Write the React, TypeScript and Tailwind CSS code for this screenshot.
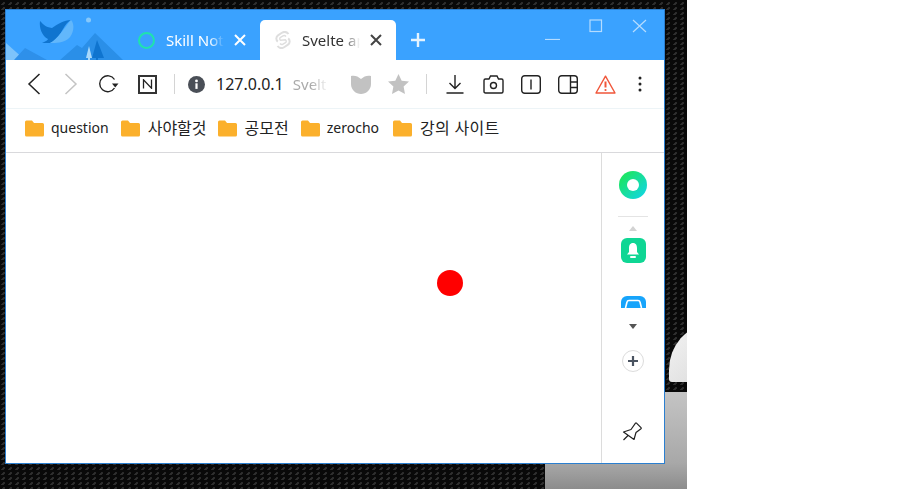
import React from "react";

const sans = "font-['Noto_Sans','Noto_Sans_CJK_KR',sans-serif]";

function Slot({ w, children, className = "" }: { w: string; children?: React.ReactNode; className?: string }) {
  return <div className={`flex items-center justify-center shrink-0 ${w} ${className}`}>{children}</div>;
}

function Folder() {
  return (
    <svg width="19" height="17" viewBox="0 0 19 17" className="shrink-0">
      <path d="M0 2Q0 .5 1.5 .5H7L9 3H17.5Q19 3 19 4.5V15Q19 16.5 17.5 16.5H1.5Q0 16.5 0 15Z" fill="#fbb02c" />
    </svg>
  );
}

function Bookmark({ label, gap, size, className = "" }: { label: string; gap: string; size: string; className?: string }) {
  return (
    <div className={`flex items-center ${gap} ${className}`}>
      <Folder />
      <span className={`${size} leading-none text-[#222] whitespace-nowrap`}>{label}</span>
    </div>
  );
}

function X({ c, w = 2 }: { c: string; w?: number }) {
  return (
    <svg width="12" height="12" viewBox="0 0 12 12">
      <path d="M1 1L11 11M11 1L1 11" stroke={c} strokeWidth={w} fill="none" />
    </svg>
  );
}

function Header() {
  return (
    <div className="relative h-[50px] bg-[#3aa2ff] overflow-hidden shrink-0">
      <svg className="absolute left-0 top-0" width="140" height="50" viewBox="0 0 140 50">
        <path d="M0 33L19 50H0Z" fill="#7cc3fb" />
        <path d="M8 50L19 38L41 50Z" fill="#2e90ea" />
        <path d="M54 50L71 35L76 38L89 23L117 50Z" fill="#2a8fe8" />
        <path d="M91 30L86 48H90V50H92V48H98Z" fill="#0f74cf" />
        <path d="M83 36L80 48H82V50H84V48H86Z" fill="#a9d8fb" />
        <path d="M34 11C37 14 39 17 46 18C52 14 58 10 65 10C56 15 56 28 44 33L36 33C40 31 42 30 42 29C36 26 33 18 34 11Z" fill="#0f74cf" />
        <path d="M65 10C69 14 68 24 62 29C57 33 50 33 44 33C52 29 58 18 65 10Z" fill="#62b7fb" />
        <circle cx="82.5" cy="10" r="2.5" fill="#86c8fb" />
      </svg>
      <div className="relative flex h-full pl-[130px] pt-[10px]">
        <div className="flex items-center w-[124px] h-[40px]">
          <Slot w="w-[20px]">
            <div className="w-[17px] h-[17px] rounded-full border-2 border-[#1fe3ad]" />
          </Slot>
          <span className={`ml-[10px] w-[58px] whitespace-nowrap text-[15px] leading-none text-white ${sans} [mask-image:linear-gradient(90deg,#000_75%,transparent)]`}>
            Skill Not
          </span>
          <Slot w="w-[12px]" className="ml-[10px]">
            <X c="#ffffff" />
          </Slot>
        </div>
        <div className="flex items-center w-[136px] h-[40px] bg-white rounded-t-[5px]">
          <Slot w="w-[18px]" className="ml-[14px]">
            <svg width="16" height="18" viewBox="0 0 16 18" fill="none" stroke="#dedede" strokeWidth="2">
              <path d="M13.5 3C11.5 .5 8.5 .7 6.5 2L3 4.3C.8 5.8 .8 9 2.8 10.6" />
              <path d="M2.5 15C4.5 17.5 7.5 17.3 9.5 16L13 13.7C15.2 12.2 15.2 9 13.2 7.4" />
              <path d="M11 5.5C10 4.3 8.8 4.3 8 4.8L5.5 6.4C4.5 7 4.5 8.5 5.5 9.3L10.5 8.7C11.5 9.5 11.5 11 10.5 11.6L8 13.2C7.2 13.7 6 13.7 5 12.5" strokeWidth="1.4" />
            </svg>
          </Slot>
          <span className={`ml-[10px] w-[58px] whitespace-nowrap text-[15px] leading-none text-[#333] ${sans} [mask-image:linear-gradient(90deg,#000_70%,transparent)]`}>
            Svelte ap
          </span>
          <Slot w="w-[12px]" className="ml-[10px]">
            <X c="#444444" />
          </Slot>
        </div>
        <Slot w="w-[16px]" className="ml-[14px] h-[40px]">
          <svg width="16" height="16" viewBox="0 0 16 16">
            <path d="M8 1V15M1 8H15" stroke="#e4f3ff" strokeWidth="2.4" />
          </svg>
        </Slot>
      </div>
      <div className="absolute right-0 top-0 flex items-start pt-[9px] pr-[17px] gap-[29px]">
        <svg width="15" height="13" viewBox="0 0 15 13" className="mt-[8px]">
          <path d="M0 12.5H15" stroke="#b5dcff" strokeWidth="1.2" />
        </svg>
        <svg width="14" height="14" viewBox="0 0 14 14">
          <rect x="1" y="1" width="11.5" height="11.5" fill="none" stroke="#b5dcff" strokeWidth="1.2" />
        </svg>
        <svg width="15" height="15" viewBox="0 0 15 15">
          <path d="M1 1L14 13M14 1L1 13" stroke="#b5dcff" strokeWidth="1.2" fill="none" />
        </svg>
      </div>
    </div>
  );
}

function Toolbar() {
  return (
    <div className="flex items-center h-[49px] pl-[9px] bg-white border-b border-[#edf4f7] shrink-0">
      <Slot w="w-[38px]">
        <svg width="14" height="22" viewBox="0 0 14 22"><path d="M12.5 1L2 11L12.5 21" fill="none" stroke="#222" strokeWidth="1.5" /></svg>
      </Slot>
      <Slot w="w-[36px]">
        <svg width="14" height="22" viewBox="0 0 14 22"><path d="M1.5 1L12 11L1.5 21" fill="none" stroke="#c4c4c4" strokeWidth="1.5" /></svg>
      </Slot>
      <Slot w="w-[38px]">
        <svg width="22" height="20" viewBox="0 0 22 20" fill="none">
          <path d="M17.5 5.5A8 8 0 1 0 17.5 14" stroke="#222" strokeWidth="1.4" />
          <path d="M15 9.5H21.5L18.2 13.5Z" fill="#222" />
        </svg>
      </Slot>
      <Slot w="w-[40px]">
        <div className="w-[19px] h-[19px] border-2 border-[#333] flex items-center justify-center">
          <svg width="11" height="10" viewBox="0 0 11 10"><path d="M1.5 9.5V.8L9.5 9.2V.5" fill="none" stroke="#222" strokeWidth="1.3" /></svg>
        </div>
      </Slot>
      <div className="w-px h-[20px] bg-[#d4d4d4] ml-[7px]" />
      <Slot w="w-[18px]" className="ml-[12px]">
        <svg width="17" height="17" viewBox="0 0 17 17">
          <circle cx="8.5" cy="8.5" r="8.5" fill="#4a4f57" />
          <rect x="7.4" y="7.3" width="2.2" height="5.6" fill="#fff" />
          <circle cx="8.5" cy="4.9" r="1.4" fill="#fff" />
        </svg>
      </Slot>
      <span className={`ml-[11px] text-[16px] leading-none text-[#222] whitespace-nowrap ${sans}`}>127.0.0.1</span>
      <span className={`ml-[9px] w-[36px] text-[15px] leading-none text-[#aaa] whitespace-nowrap ${sans} [mask-image:linear-gradient(90deg,#000_50%,transparent)]`}>Svelt</span>
      <Slot w="w-[24px]" className="ml-[20px]">
        <svg width="22" height="20" viewBox="0 0 22 20"><path d="M1 2C4 1 8 2 11 5C14 2 18 1 21 2V10C21 16 16 20 11 20C6 20 1 16 1 10Z" fill="#c2c2c2" /></svg>
      </Slot>
      <Slot w="w-[22px]" className="ml-[15px]">
        <svg width="21" height="20" viewBox="0 0 21 20"><path d="M10.5 0L13.7 6.7L21 7.6L15.6 12.6L17 20L10.5 16.4L4 20L5.4 12.6L0 7.6L7.3 6.7Z" fill="#c2c2c2" /></svg>
      </Slot>
      <div className="w-px h-[20px] bg-[#d4d4d4] ml-[16px]" />
      <Slot w="w-[18px]" className="ml-[19px]">
        <svg width="18" height="19" viewBox="0 0 18 19" fill="none" stroke="#222" strokeWidth="1.4">
          <path d="M9 0V13M3.5 8L9 13.5L14.5 8M.5 18H17.5" />
        </svg>
      </Slot>
      <Slot w="w-[22px]" className="ml-[19px]">
        <svg width="21" height="19" viewBox="0 0 21 19" fill="none" stroke="#222" strokeWidth="1.4">
          <path d="M2.5 4H6L7.5 1H14L15.5 4H18.5Q20 4 20 5.5V16.5Q20 18 18.5 18H2.5Q1 18 1 16.5V5.5Q1 4 2.5 4Z" />
          <circle cx="10.5" cy="10.5" r="3" />
        </svg>
      </Slot>
      <Slot w="w-[20px]" className="ml-[16px]">
        <svg width="20" height="19" viewBox="0 0 20 19" fill="none" stroke="#222" strokeWidth="1.4">
          <rect x=".7" y=".7" width="18.6" height="17.6" rx="3" />
          <path d="M10 4.5V14.5" />
        </svg>
      </Slot>
      <Slot w="w-[20px]" className="ml-[17px]">
        <svg width="20" height="19" viewBox="0 0 20 19" fill="none" stroke="#222" strokeWidth="1.4">
          <rect x=".7" y=".7" width="18.6" height="17.6" rx="3" />
          <path d="M12.5 1V18M12.5 7H19M12.5 12.5H19" />
        </svg>
      </Slot>
      <Slot w="w-[21px]" className="ml-[17px]">
        <svg width="21" height="19" viewBox="0 0 21 19" fill="none">
          <path d="M10.5 1.2L20 18H1Z" stroke="#f0563a" strokeWidth="1.4" strokeLinejoin="round" />
          <path d="M10.5 6.5V12.5" stroke="#f0563a" strokeWidth="2" />
          <circle cx="10.5" cy="15" r="1.1" fill="#f0563a" />
        </svg>
      </Slot>
      <Slot w="w-[4px]" className="ml-[22px]">
        <svg width="4" height="16" viewBox="0 0 4 16" fill="#222">
          <circle cx="2" cy="2" r="1.5" /><circle cx="2" cy="8" r="1.5" /><circle cx="2" cy="14" r="1.5" />
        </svg>
      </Slot>
    </div>
  );
}

function BookmarkBar() {
  return (
    <div className={`flex items-center h-[44px] pl-[19px] pb-[5px] bg-white border-b border-[#d9d9dc] shrink-0 ${sans}`}>
      <Bookmark label="question" gap="gap-[7px]" size="text-[14px]" />
      <Bookmark label="사야할것" gap="gap-[8px]" size="text-[16px]" className="ml-[12px]" />
      <Bookmark label="공모전" gap="gap-[8px]" size="text-[16px]" className="ml-[11px]" />
      <Bookmark label="zerocho" gap="gap-[7px]" size="text-[14px]" className="ml-[12px]" />
      <Bookmark label="강의 사이트" gap="gap-[8px]" size="text-[16px] tracking-[0.3px]" className="ml-[14px]" />
    </div>
  );
}

function Sidebar() {
  return (
    <div className="flex flex-col items-center w-[63px] shrink-0 border-l border-[#dcdcdc] pt-[18px]">
      <div className="w-[28px] h-[28px] rounded-full bg-[linear-gradient(135deg,#1ee84a,#10d4f0)] flex items-center justify-center">
        <div className="w-[12px] h-[12px] rounded-full bg-white" />
      </div>
      <div className="w-[30px] h-px bg-[#e4e4e4] mt-[17px]" />
      <div className="w-0 h-0 mt-[9px] border-x-[4px] border-x-transparent border-b-[5px] border-b-[#d3d3d3]" />
      <div className="w-[25px] h-[25px] mt-[7px] rounded-[6px] bg-[#0fd694] flex items-center justify-center">
        <svg width="14" height="17" viewBox="0 0 14 17" fill="#fff">
          <path d="M7 1C4 1 3 3.5 3 6V10L1 12.5H13L11 10V6C11 3.5 10 1 7 1Z" />
          <rect x="4" y="14" width="6" height="2" rx="1" />
        </svg>
      </div>
      <div className="w-[25px] h-[12px] mt-[33px] rounded-t-[6px] bg-[#17a4fb] overflow-hidden">
        <svg width="25" height="12" viewBox="0 0 25 12" fill="none">
          <path d="M4.5 12L6 6Q6.3 4.5 8 4.5H17Q18.7 4.5 19 6L20.5 12" stroke="#fff" strokeWidth="1.6" />
        </svg>
      </div>
      <div className="w-0 h-0 mt-[16px] border-x-[4px] border-x-transparent border-t-[5px] border-t-[#555]" />
      <div className="w-[22px] h-[22px] mt-[21px] rounded-full border border-[#dcdcdc] flex items-center justify-center">
        <svg width="12" height="12" viewBox="0 0 12 12"><path d="M6 1V11M1 6H11" stroke="#4a5360" strokeWidth="2.2" /></svg>
      </div>
      <svg width="20" height="20" viewBox="0 0 20 20" className="mt-[49px] -ml-[2px]" fill="none" stroke="#222" strokeWidth="1.2">
        <path d="M1.5 11L9 8.5L13.5 2.2Q14 1.7 14.5 2.2L19 6.7Q19.5 7.2 19 7.7L14 11.5L12 18.5ZM6 14.5L1.5 19" strokeLinejoin="round" />
      </svg>
    </div>
  );
}

export default function App() {
  return (
    <div className="w-[915px] h-[503px] bg-white overflow-hidden">
      <div className="relative w-[687px] h-[489px] overflow-hidden bg-[#090909] bg-[radial-gradient(circle_at_2px_5px,#303030_0.6px,transparent_1.4px),radial-gradient(circle_at_3px_4px,#303030_0.6px,transparent_1.4px),radial-gradient(circle_at_4px_3px,#303030_0.6px,transparent_1.4px)] bg-[length:7px_5px] pt-[9px] pl-[5px]">
        {/* wallpaper */}
        <div className="absolute left-[545px] top-[463px] w-[142px] h-[26px] bg-[linear-gradient(180deg,#a8a8a8,#8c8c8c)]" />
        <div className="absolute left-[665px] top-[392px] w-[22px] h-[71px] bg-[linear-gradient(180deg,#c4c4c4,#a8a8a8)]" />
        <div className="absolute left-[669px] top-[325px] w-[40px] h-[57px] rounded-tl-[40px_45px] rounded-bl-[3px] bg-[linear-gradient(135deg,#f4f4f4,#dcdcdc)]" />

        <div className="relative flex flex-col w-[660px] h-[455px] border border-[#2b7fd0] bg-white">
          <Header />
          <Toolbar />
          <BookmarkBar />
          <div className="flex flex-1 min-h-0">
            <div className="relative flex-1">
              <div className="absolute left-[431px] top-[117px] w-[26px] h-[26px] rounded-full bg-[#ff0000]" />
            </div>
            <Sidebar />
          </div>
        </div>
      </div>
    </div>
  );
}
